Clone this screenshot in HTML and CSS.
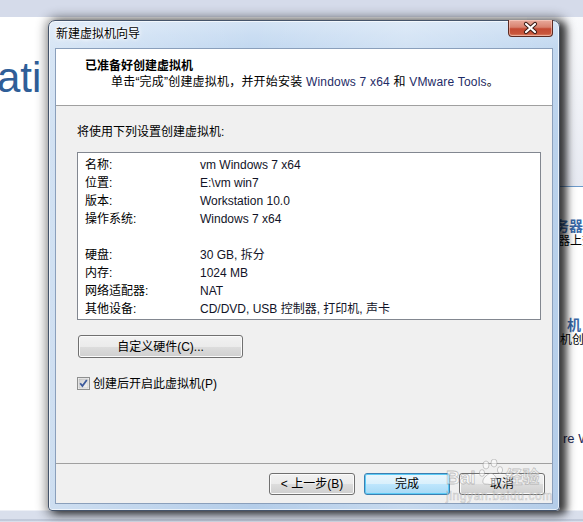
FILE: index.html
```html
<!DOCTYPE html>
<html lang="zh-CN">
<head>
<meta charset="utf-8">
<title>新建虚拟机向导</title>
<link rel="stylesheet" href="styles.css">
</head>
<body>
<div class="app">
  <div class="topband"></div>
  <div class="app-main">
    <div class="app-left"><div class="hero">ati</div></div>
    <div class="app-right">
      <div class="panel"></div>
      <div class="sec sec1">
        <div class="sec-title t1">务器</div>
        <div class="sec-text s1">器上查看</div>
      </div>
      <div class="sec sec2">
        <div class="sec-title t2">机</div>
        <div class="sec-text s2">机创建</div>
      </div>
      <div class="sec sec3">
        <div class="sec-en">re Workstation</div>
      </div>
    </div>
  </div>
</div>

<div class="dialog">
  <div class="titlebar">
    <span class="title">新建虚拟机向导</span>
    <div class="close">
      <svg width="43" height="16" viewBox="0 0 43 16">
        <path d="M17 4 L26 12 M26 4 L17 12" stroke="#3b1b15" stroke-width="4.2" stroke-linecap="round" fill="none"/>
        <path d="M17 4 L26 12 M26 4 L17 12" stroke="#ffffff" stroke-width="2.2" stroke-linecap="round" fill="none"/>
      </svg>
    </div>
  </div>
  <div class="client">
    <div class="header">
      <div class="h-title">已准备好创建虚拟机</div>
      <div class="h-sub">单击“完成”创建虚拟机，并开始安装 <span class="en">Windows 7 x64</span> 和 <span class="en">VMware Tools</span>。</div>
    </div>
    <div class="body">
      <div class="intro">将使用下列设置创建虚拟机:</div>
      <div class="listbox">
        <div class="row"><span class="k">名称:</span><span class="v">vm Windows 7 x64</span></div>
        <div class="row"><span class="k">位置:</span><span class="v">E:\vm win7</span></div>
        <div class="row"><span class="k">版本:</span><span class="v">Workstation 10.0</span></div>
        <div class="row"><span class="k">操作系统:</span><span class="v">Windows 7 x64</span></div>
        <div class="row"></div>
        <div class="row"><span class="k">硬盘:</span><span class="v">30 GB, 拆分</span></div>
        <div class="row"><span class="k">内存:</span><span class="v">1024 MB</span></div>
        <div class="row"><span class="k">网络适配器:</span><span class="v">NAT</span></div>
        <div class="row"><span class="k">其他设备:</span><span class="v">CD/DVD, USB 控制器, 打印机, 声卡</span></div>
      </div>
      <div class="btn btn-custom">自定义硬件(C)...</div>
      <div class="check-row">
        <svg class="cb" width="13" height="13" viewBox="0 0 13 13">
          <defs>
            <linearGradient id="cbg" x1="0" y1="0" x2="1" y2="1">
              <stop offset="0" stop-color="#cfcfcf"/>
              <stop offset="1" stop-color="#f6f6f6"/>
            </linearGradient>
          </defs>
          <rect x="0.5" y="0.5" width="12" height="12" fill="#f4f4f4" stroke="#8e8f8f"/>
          <rect x="2" y="2" width="9" height="9" fill="url(#cbg)" stroke="#b0b0b0" stroke-width="0.5"/>
          <path d="M3.2 6.3 L5.4 9 L9.8 3" stroke="#3c5a9c" stroke-width="1.8" fill="none"/>
        </svg>
        <span class="cb-label">创建后开启此虚拟机(P)</span>
      </div>
      <div class="footer">
        <div class="btn">&lt; 上一步(B)</div>
        <div class="btn btn-default">完成</div>
        <div class="btn">取消</div>
      </div>
    </div>
  </div>
</div>

<div class="wm">
  <div class="wm-top">
    <span class="wm-bai">Bai</span>
    <svg class="wm-paw" width="26" height="30" viewBox="0 0 26 30">
      <g fill="rgba(255,255,255,0.55)" stroke="rgba(110,110,110,0.35)" stroke-width="1">
        <ellipse cx="7" cy="6" rx="3" ry="4"/>
        <ellipse cx="15" cy="4" rx="3" ry="4"/>
        <ellipse cx="3" cy="14" rx="2.6" ry="3.4"/>
        <ellipse cx="21" cy="11" rx="2.6" ry="3.4"/>
        <path d="M6 25 C3 25 3 20 7 17 C10 14 13 13 16 17 C19 21 20 26 15 26 C12 26 10 25 6 25 Z"/>
      </g>
    </svg>
    <span class="wm-jy">经验</span>
  </div>
  <div class="wm-url">jingyan.baidu.com</div>
</div>
</body>
</html>
```
FILE: styles.css
```css
html, body {
  margin: 0;
  padding: 0;
}
body {
  width: 583px;
  height: 522px;
  overflow: hidden;
  position: relative;
  background: #ffffff;
  font-family: "Liberation Sans", "Noto Sans CJK SC", sans-serif;
  font-size: 12px;
  color: #000;
}

/* background application */
.app {
  display: flex;
  flex-direction: column;
  height: 522px;
}
.topband {
  height: 17px;
  background: #d5dbea;
  flex: none;
}
.app-main {
  flex: 1;
  display: grid;
  grid-template-columns: 527px 1fr;
  background: linear-gradient(to bottom, #ffffff 0, #ffffff 493px, #d9dfec 494px, #d9dfec 502px, #aab4c8 503px, #d9dfec 504px);
}
.hero {
  margin-top: 37px;
  margin-left: -3px;
  font-family: "Liberation Sans", sans-serif;
  font-size: 42px;
  line-height: 48px;
  color: #2f5e98;
}
.app-right {
  display: flex;
  flex-direction: column;
  white-space: nowrap;
  overflow: hidden;
}
.panel {
  height: 169px;
  background: linear-gradient(to bottom, #f9fafc, #e7eaf2);
  border-bottom: 1px solid #6d9bcc;
}
.sec-title {
  font-size: 14px;
  line-height: 16px;
  font-weight: bold;
  color: #3a69a8;
}
.sec-text {
  font-size: 12px;
  line-height: 14px;
}
.t1 { padding-left: 28px; }
.s1 { padding-left: 31px; }
.t2 { padding-left: 40px; }
.s2 { padding-left: 33px; }
.sec1 { margin-top: 31px; }
.sec2 { margin-top: 69px; }
.sec3 { margin-top: 84px; padding-left: 36px; }
.sec-en {
  font-size: 13px;
  line-height: 16px;
  color: #1d2a55;
}

/* dialog window */
.dialog {
  position: absolute;
  left: 48px;
  top: 20px;
  width: 512px;
  height: 491px;
  box-sizing: border-box;
  border: 1px solid #45546a;
  border-radius: 7px 7px 4px 4px;
  background: linear-gradient(to right, rgba(255,255,255,0.35), rgba(255,255,255,0) 40%, rgba(255,255,255,0.25) 70%, rgba(255,255,255,0)),
              linear-gradient(to bottom, #d3e3f5 0, #c2d8f0 28px, #bad2ec 120px, #b4cde9 100%);
  box-shadow: 6px 2px 7px 0 rgba(0,0,0,0.6), 2px 1px 11px 4px rgba(0,0,0,0.45), inset 0 0 0 1px rgba(255,255,255,0.65);
  display: flex;
  flex-direction: column;
}
.titlebar {
  height: 27px;
  flex: none;
  display: flex;
  align-items: flex-start;
  padding: 0 6px 0 7px;
}
.title {
  line-height: 27px;
  font-size: 12px;
  color: #000;
  text-shadow: 0 0 6px #fff, 0 0 4px #fff, 0 0 2px #fff;
}
.close {
  margin-left: auto;
  margin-top: -1px;
  width: 43px;
  height: 16px;
  border: 1px solid #5c2a22;
  border-top: 0;
  border-radius: 0 0 4px 4px;
  background: linear-gradient(to bottom, #e9ab9d 0, #d8826f 45%, #c44a33 55%, #c8563c 85%, #e08a6c 100%);
  box-shadow: inset 0 0 0 1px rgba(255,220,210,0.5);
  display: flex;
}
.client {
  flex: 1;
  margin: 0 6px 6px;
  border: 1px solid #8a9fbb;
  background: #f0f0f0;
  display: flex;
  flex-direction: column;
}
.header {
  flex: none;
  height: 47px;
  background: #ffffff;
  border-bottom: 1px solid #a0a0a0;
  padding-top: 9px;
}
.h-title {
  font-weight: bold;
  line-height: 16px;
  padding-left: 29px;
}
.h-sub {
  line-height: 16px;
  padding-left: 55px;
  letter-spacing: 0.2px;
}
.en {
  color: #1e2b66;
}
.body {
  flex: 1;
  display: flex;
  flex-direction: column;
  align-items: flex-start;
  padding-left: 21px;
}
.intro {
  margin-top: 19px;
  line-height: 14px;
}
.listbox {
  margin-top: 13px;
  width: 464px;
  height: 168px;
  box-sizing: border-box;
  border: 1px solid #828790;
  background: #ffffff;
  padding-top: 3px;
  padding-left: 7px;
}
.row {
  height: 18px;
  line-height: 18px;
  display: flex;
}
.k {
  width: 115px;
  flex: none;
}
.v {
  color: #111327;
}
.btn {
  height: 22px;
  box-sizing: border-box;
  border: 1px solid #707070;
  border-radius: 3px;
  background: linear-gradient(to bottom, #f2f2f2 0, #ebebeb 50%, #dddddd 50%, #cfcfcf 100%);
  box-shadow: inset 0 0 0 1px #fbfbfb;
  display: flex;
  align-items: center;
  justify-content: center;
  line-height: 20px;
}
.btn-custom {
  margin-top: 15px;
  margin-left: 1px;
  width: 165px;
  height: 23px;
}
.check-row {
  margin-top: 19px;
  display: flex;
  align-items: center;
  height: 13px;
}
.cb {
  display: block;
  flex: none;
}
.cb-label {
  margin-left: 3px;
  line-height: 14px;
}
.footer {
  margin-top: auto;
  margin-left: -21px;
  align-self: stretch;
  border-top: 1px solid #a0a0a0;
  padding: 9px 7px 8px 0;
  display: flex;
  justify-content: flex-end;
  gap: 9px;
}
.footer .btn {
  width: 86px;
}
.btn-default {
  border-color: #3c7fb1;
  background: linear-gradient(to bottom, #eaf6fd 0, #d9f0fc 50%, #bee6fd 50%, #a7d9f5 100%);
  box-shadow: inset 0 0 0 1px #5ccbf6;
}

/* watermark overlay */
.wm {
  position: absolute;
  left: 446px;
  top: 456px;
  width: 110px;
  pointer-events: none;
}
.wm-top {
  display: flex;
  align-items: flex-end;
  height: 33px;
}
.wm-bai {
  font-family: "Liberation Sans", sans-serif;
  font-size: 19px;
  font-weight: bold;
  line-height: 20px;
  color: rgba(255,255,255,0.5);
  -webkit-text-stroke: 0.8px rgba(110,110,110,0.4);
  margin-bottom: 1px;
}
.wm-paw {
  display: block;
  margin-left: 3px;
}
.wm-jy {
  font-size: 17px;
  font-weight: bold;
  line-height: 20px;
  color: rgba(255,255,255,0.5);
  -webkit-text-stroke: 0.8px rgba(110,110,110,0.4);
  margin-left: 1px;
  margin-bottom: 1px;
}
.wm-url {
  font-family: "Liberation Sans", sans-serif;
  font-size: 12px;
  line-height: 14px;
  letter-spacing: 0.6px;
  color: rgba(255,255,255,0.45);
  -webkit-text-stroke: 0.6px rgba(110,110,110,0.35);
}
```
